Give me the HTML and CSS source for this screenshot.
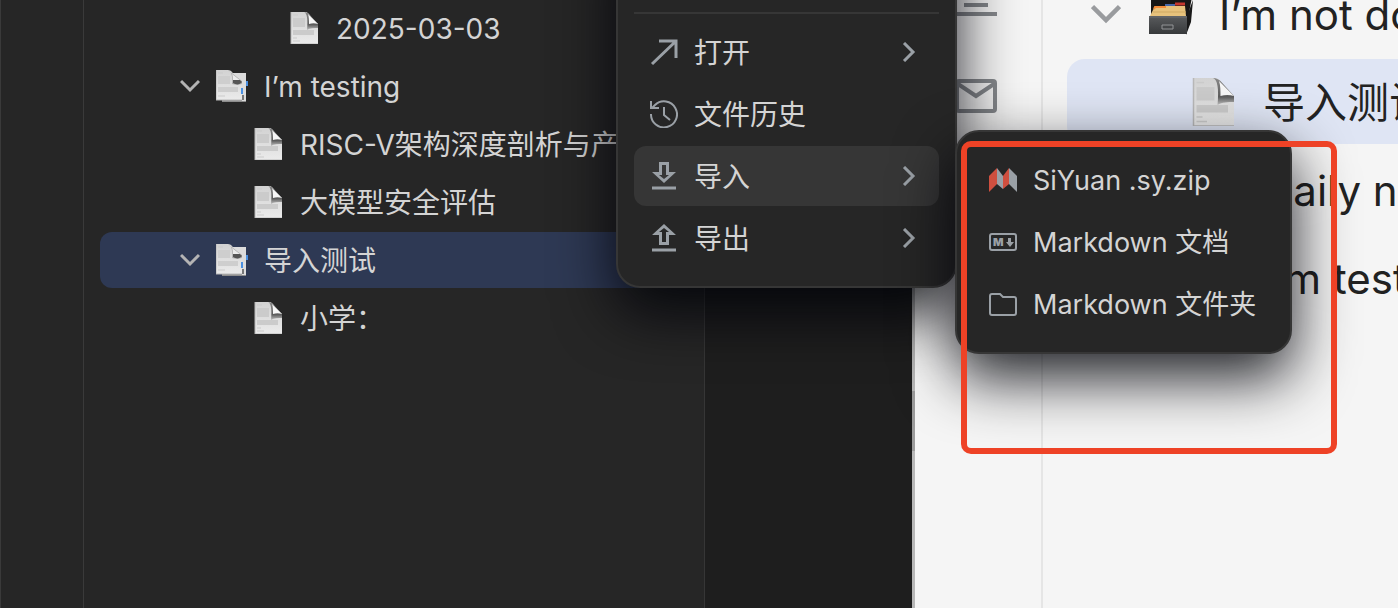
FILE: index.html
```html
<!DOCTYPE html>
<html lang="zh-CN">
<head>
  <meta charset="UTF-8" />
  <meta name="viewport" content="width=device-width, initial-scale=1.0"/>
  <title>导入测试</title>
  <link rel="stylesheet" href="styles.css">
</head>
<body>

  <svg class="defs" aria-hidden="true">
    <defs>
      <linearGradient id="paper" x1="0" y1="0" x2="0" y2="1">
        <stop offset="0" stop-color="#d2d2d2"/>
        <stop offset="1" stop-color="#ebebeb"/>
      </linearGradient>
      <linearGradient id="curl" x1="0" y1="0" x2="0" y2="1">
        <stop offset="0" stop-color="#8a8a8a"/>
        <stop offset="0.7" stop-color="#5c5c5c"/>
        <stop offset="1" stop-color="#c0c0c0"/>
      </linearGradient>
      <linearGradient id="drawer" x1="0" y1="0" x2="0" y2="1">
        <stop offset="0" stop-color="#595b5d"/>
        <stop offset="1" stop-color="#37393b"/>
      </linearGradient>
    </defs>
    <symbol id="iconPage" viewBox="0 0 32 32">
      <path d="M3 0h14c3 0 4 2 6 5l7 7v20H3z" fill="url(#paper)"/>
      <path d="M5 6h12v9H5zM5 18h21v5H5z" fill="#cbcbcb"/>
      <path d="M5 3h5M5 26h4M5 29h7" stroke="#cbcbcb" stroke-width="1"/>
      <path d="M16 0c3 1 4 7 3 18 3-2 7-2 11-2v-4L21 2c-1-1-3-2-5-2z" fill="url(#curl)"/>
      <path d="M20 2c1 3 1 6 1 10 3-1 6-1 9 0z" fill="#f6f6f6"/>
      <path d="M3 0v32h27" fill="none" stroke="#b8b8b8" stroke-width="1"/>
    </symbol>
    <symbol id="iconPages" viewBox="0 0 32 32">
      <path d="M6 3h24v29H6z" fill="#8d8d8d"/>
      <path d="M14 3h16v28h-4V12z" fill="#dcdcdc"/>
      <path d="M30 11h2v5h-2z" fill="#4a90e2"/>
      <path d="M0 0h12c3 0 5 3 6 5l8 6v19H0z" fill="url(#paper)"/>
      <path d="M2 6h12v8H2zM2 17h20v5H2z" fill="#cecece"/>
      <path d="M2 3h5M2 26h7" stroke="#cbcbcb" stroke-width="1"/>
      <path d="M12 0c3 1 5 6 4 14 3 1 7 1 10 0v-3z" fill="#b0b0b0"/>
      <path d="M16 4c1 2 1 4 1 6l8 1z" fill="#ececec"/>
      <path d="M17 10h7l2 2c-2 3-6 3-9 1z" fill="#565656"/>
      <path d="M25 18h2v6h-2z" fill="#4a90e2"/>
      <path d="M26 25h2v5h-2z" fill="#777"/>
      <path d="M0 0v30h26" fill="none" stroke="#b8b8b8" stroke-width="1"/>
    </symbol>
    <symbol id="iconCabinet" viewBox="0 0 44 44">
      <path d="M2 0h42l-5 26H2z" fill="#161616"/>
      <path d="M38 24l6-16-2 22-5 13z" fill="#191919"/>
      <path d="M1 24l4-8h10l1-2h20l1 10z" fill="#e7c27c"/>
      <path d="M5 17l1-2h11" fill="none" stroke="#f28b38" stroke-width="2"/>
      <path d="M16 13h10" stroke="#4667a8" stroke-width="2"/>
      <path d="M26 12h10" stroke="#c5372d" stroke-width="3"/>
      <path d="M4 20h33" stroke="#cfa963" stroke-width="1"/>
      <path d="M0 24h38v18H0z" fill="url(#drawer)"/>
      <path d="M0 25h38" stroke="#6d6f71" stroke-width="1"/>
      <path d="M13 33v4h11v-4z" fill="none" stroke="#929496" stroke-width="1"/>
    </symbol>
    <symbol id="iconDown" viewBox="0 0 20 20">
      <path d="M1 5l9 9 9-9" fill="none" stroke="currentColor" stroke-width="3"/>
    </symbol>
    <symbol id="iconRight" viewBox="0 0 20 20">
      <path d="M5 1l9 9-9 9" fill="none" stroke="currentColor" stroke-width="3"/>
    </symbol>
  </svg>

  <div class="desktop">
    <section class="window dark">
      <aside class="dock"></aside>
      <nav class="tree" aria-label="文档树">
        <a class="row level-3" href="#"><svg class="icon"><use href="#iconPage"/></svg><span>2025-03-03</span></a>
        <a class="row level-1" href="#"><svg class="arrow"><use href="#iconDown"/></svg><svg class="icon"><use href="#iconPages"/></svg><span>I’m testing</span></a>
        <a class="row level-2" href="#"><svg class="icon"><use href="#iconPage"/></svg><span>RISC-V架构深度剖析与产</span></a>
        <a class="row level-2" href="#"><svg class="icon"><use href="#iconPage"/></svg><span>大模型安全评估</span></a>
        <a class="row level-1 selected" href="#"><svg class="arrow"><use href="#iconDown"/></svg><svg class="icon"><use href="#iconPages"/></svg><span>导入测试</span></a>
        <a class="row level-2" href="#"><svg class="icon"><use href="#iconPage"/></svg><span>小学：</span></a>
      </nav>
      <main class="editor"></main>
    </section>

    <section class="window light">
      <div class="scrollbar"><div class="thumb"></div></div>
      <aside class="dock">
        <svg class="dock-icon" viewBox="0 0 42 42">
          <path d="M0 3h42M9 12h24M0 21h42M9 31h24M0 40h42" stroke="currentColor" stroke-width="4"/>
        </svg>
        <svg class="dock-icon" viewBox="0 0 42 42">
          <rect x="2" y="7" width="38" height="30" rx="2" fill="none" stroke="currentColor" stroke-width="4"/>
          <path d="M3 10l18 12 18-12" fill="none" stroke="currentColor" stroke-width="4"/>
        </svg>
      </aside>
      <nav class="tree" aria-label="文档">
        <a class="row parent" href="#"><svg class="arrow"><use href="#iconDown"/></svg><svg class="icon"><use href="#iconCabinet"/></svg><span>I’m not do</span></a>
        <a class="row selected" href="#"><svg class="icon"><use href="#iconPage"/></svg><span>导入测试</span></a>
        <a class="row" href="#"><svg class="icon"><use href="#iconPage"/></svg><span>Daily no</span></a>
        <a class="row" href="#"><svg class="icon"><use href="#iconPage"/></svg><span>I’m test</span></a>
      </nav>
    </section>
  </div>

  <div class="menu main-menu">
    <hr>
    <button class="item">
      <svg class="icon" viewBox="0 0 28 28"><path d="M2 26L25 4M9 3h17v17" fill="none" stroke="currentColor" stroke-width="3"/></svg>
      <span class="label">打开</span>
      <svg class="arrow"><use href="#iconRight"/></svg>
    </button>
    <button class="item">
      <svg class="icon" viewBox="0 0 28 28" fill="none" stroke="currentColor">
        <path d="M1 14a13 13 0 1 0 4-9L2 8" stroke-width="2"/>
        <path d="M1 1v7h8" stroke-width="2"/>
        <path d="M14 7v8l6 5" stroke-width="2"/>
      </svg>
      <span class="label">文件历史</span>
    </button>
    <button class="item active">
      <svg class="icon" viewBox="0 0 28 28">
        <path d="M9 0h10v10h7L14 21 2 10h7zM12 3v10H9l5 4 5-4h-3V3z" fill="currentColor" fill-rule="evenodd"/>
        <path d="M2 26h24" stroke="currentColor" stroke-width="3"/>
      </svg>
      <span class="label">导入</span>
      <svg class="arrow"><use href="#iconRight"/></svg>
    </button>
    <button class="item">
      <svg class="icon" viewBox="0 0 28 28">
        <path d="M9 21h10V11h7L14 0 2 11h7zM12 18V8H9l5-4 5 4h-3v10z" fill="currentColor" fill-rule="evenodd"/>
        <path d="M2 26h24" stroke="currentColor" stroke-width="3"/>
      </svg>
      <span class="label">导出</span>
      <svg class="arrow"><use href="#iconRight"/></svg>
    </button>
  </div>

  <div class="menu sub-menu">
    <button class="item">
      <svg class="icon" viewBox="0 0 28 28">
        <path d="M0 10l8-8v16l-8 8zM14 10l6-8v16l-6 5z" fill="#cf4f3f"/>
        <path d="M8 2l6 8v13l-6-5zM20 2l8 8v16l-8-8z" fill="currentColor"/>
      </svg>
      <span class="label">SiYuan .sy.zip</span>
    </button>
    <button class="item">
      <svg class="icon" viewBox="0 0 28 28">
        <rect x="1" y="6" width="26" height="16" rx="2" fill="none" stroke="currentColor" stroke-width="2"/>
        <text class="mark" x="4" y="18">M</text>
        <path d="M19 10h3v4h3l-4 5-4-5h2z" fill="currentColor"/>
      </svg>
      <span class="label">Markdown 文档</span>
    </button>
    <button class="item">
      <svg class="icon" viewBox="0 0 28 28"><path d="M3 4h8l3 3h11q2 0 2 2v14q0 2-2 2H3q-2 0-2-2V6q0-2 2-2z" fill="none" stroke="currentColor" stroke-width="2"/></svg>
      <span class="label">Markdown 文件夹</span>
    </button>
  </div>

  <div class="highlight"></div>

</body>
</html>
```

FILE: styles.css
```css
* {
  margin: 0;
  padding: 0;
  box-sizing: border-box;
}
body {
  position: relative;
  height: 100vh;
  overflow: hidden;
  font-family: Inter, "Noto Sans CJK SC", sans-serif;
  font-size: 28px;
  line-height: 32px;
  background: #1e1e1e;
}
svg {
  flex: none;
}
.defs {
  position: absolute;
  width: 0;
  height: 0;
}
.desktop {
  display: grid;
  grid-template-columns: minmax(0, 1fr) 486px;
  height: 100vh;
  overflow: hidden;
}

/* windows */
.window {
  display: flex;
  min-width: 0;
}
.tree {
  display: flex;
  flex-direction: column;
}
.row {
  display: flex;
  align-items: center;
  flex: none;
  white-space: nowrap;
  text-decoration: none;
  color: inherit;
}
.row span,
.item .label {
  padding-top: 2px;
}

.dark {
  background: #1e1e1e;
  color: #d4d4d4;
}
.dark .dock {
  flex: none;
  width: 84px;
  background: #262626;
  border-left: 1px solid #3a3a3a;
  border-right: 1px solid #3a3a3a;
}
.dark .tree {
  flex: none;
  width: 621px;
  gap: 2px;
  padding: 0 16px;
  background: #262626;
  border-right: 1px solid #363636;
}
.dark .row {
  height: 56px;
  border-radius: 12px;
}
.dark .row .icon {
  width: 32px;
  height: 32px;
  margin-right: 16px;
}
.dark .row .arrow {
  width: 20px;
  height: 20px;
  margin-right: 16px;
  color: #b4b4b4;
}
.dark .selected {
  background: #2e3954;
}
.level-1 {
  padding-left: 80px;
}
.level-2 {
  padding-left: 152px;
}
.level-3 {
  padding-left: 188px;
}
.editor {
  flex: 1;
}

.light {
  margin-top: -32px;
  background: #f5f5f5;
  color: #222;
  font-size: 42px;
  line-height: 48px;
  overflow: hidden;
}
.scrollbar {
  flex: none;
  width: 3px;
  padding-top: 423px;
  background: #b8b8b8;
}
.thumb {
  height: 60px;
  background: #9c9c9c;
}
.light .dock {
  flex: none;
  display: flex;
  flex-direction: column;
  align-items: center;
  gap: 58px;
  width: 128px;
  padding: 6px 4px 0 0;
  border-right: 2px solid #e5e5e5;
}
.dock-icon {
  width: 42px;
  height: 42px;
  color: #85888c;
}
.light .tree {
  flex: 1;
  min-width: 0;
  gap: 3px;
  padding: 3px 0 0 24px;
}
.light .row {
  height: 85px;
  padding-left: 122px;
  border-radius: 18px 0 0 18px;
}
.light .parent {
  padding-left: 24px;
}
.light .row .icon {
  width: 48px;
  height: 48px;
  margin-right: 26px;
}
.light .row .arrow {
  width: 30px;
  height: 30px;
  margin-right: 28px;
  color: #999b9e;
}
.light .parent .icon {
  width: 44px;
  height: 44px;
}
.light .selected {
  background: #dfe5f4;
}

/* menus */
.menu {
  position: absolute;
  padding: 18px 16px;
  background: #262626;
  border: 2px solid #363636;
  border-radius: 24px;
  box-shadow: 0 24px 60px rgba(0, 2, 8, 0.88);
}
.main-menu {
  top: -90px;
  left: 616px;
  width: 341px;
  padding-top: 100px;
}
.sub-menu {
  top: 130px;
  left: 955px;
  width: 337px;
  font-size: 27px;
}
.menu hr {
  height: 2px;
  margin-bottom: 8px;
  border: 0;
  background: #363636;
}
.item {
  display: flex;
  align-items: center;
  gap: 16px;
  width: 100%;
  height: 60px;
  padding: 0 20px 0 16px;
  background: none;
  border: 0;
  border-radius: 12px;
  font: inherit;
  color: #d4d4d4;
  text-align: left;
  white-space: nowrap;
}
.item + .item {
  margin-top: 2px;
}
.item.active {
  background: #363636;
}
.item .icon {
  width: 28px;
  height: 28px;
  color: #9aa0a6;
}
.item .label {
  flex: 1;
}
.item .arrow {
  width: 20px;
  height: 20px;
  color: #9aa0a6;
}
.mark {
  font-size: 11px;
  font-weight: 900;
  fill: currentColor;
}

.highlight {
  position: absolute;
  top: 141px;
  left: 961px;
  width: 376px;
  height: 313px;
  border: 6px solid #ee4226;
  border-radius: 10px;
  pointer-events: none;
}
```
